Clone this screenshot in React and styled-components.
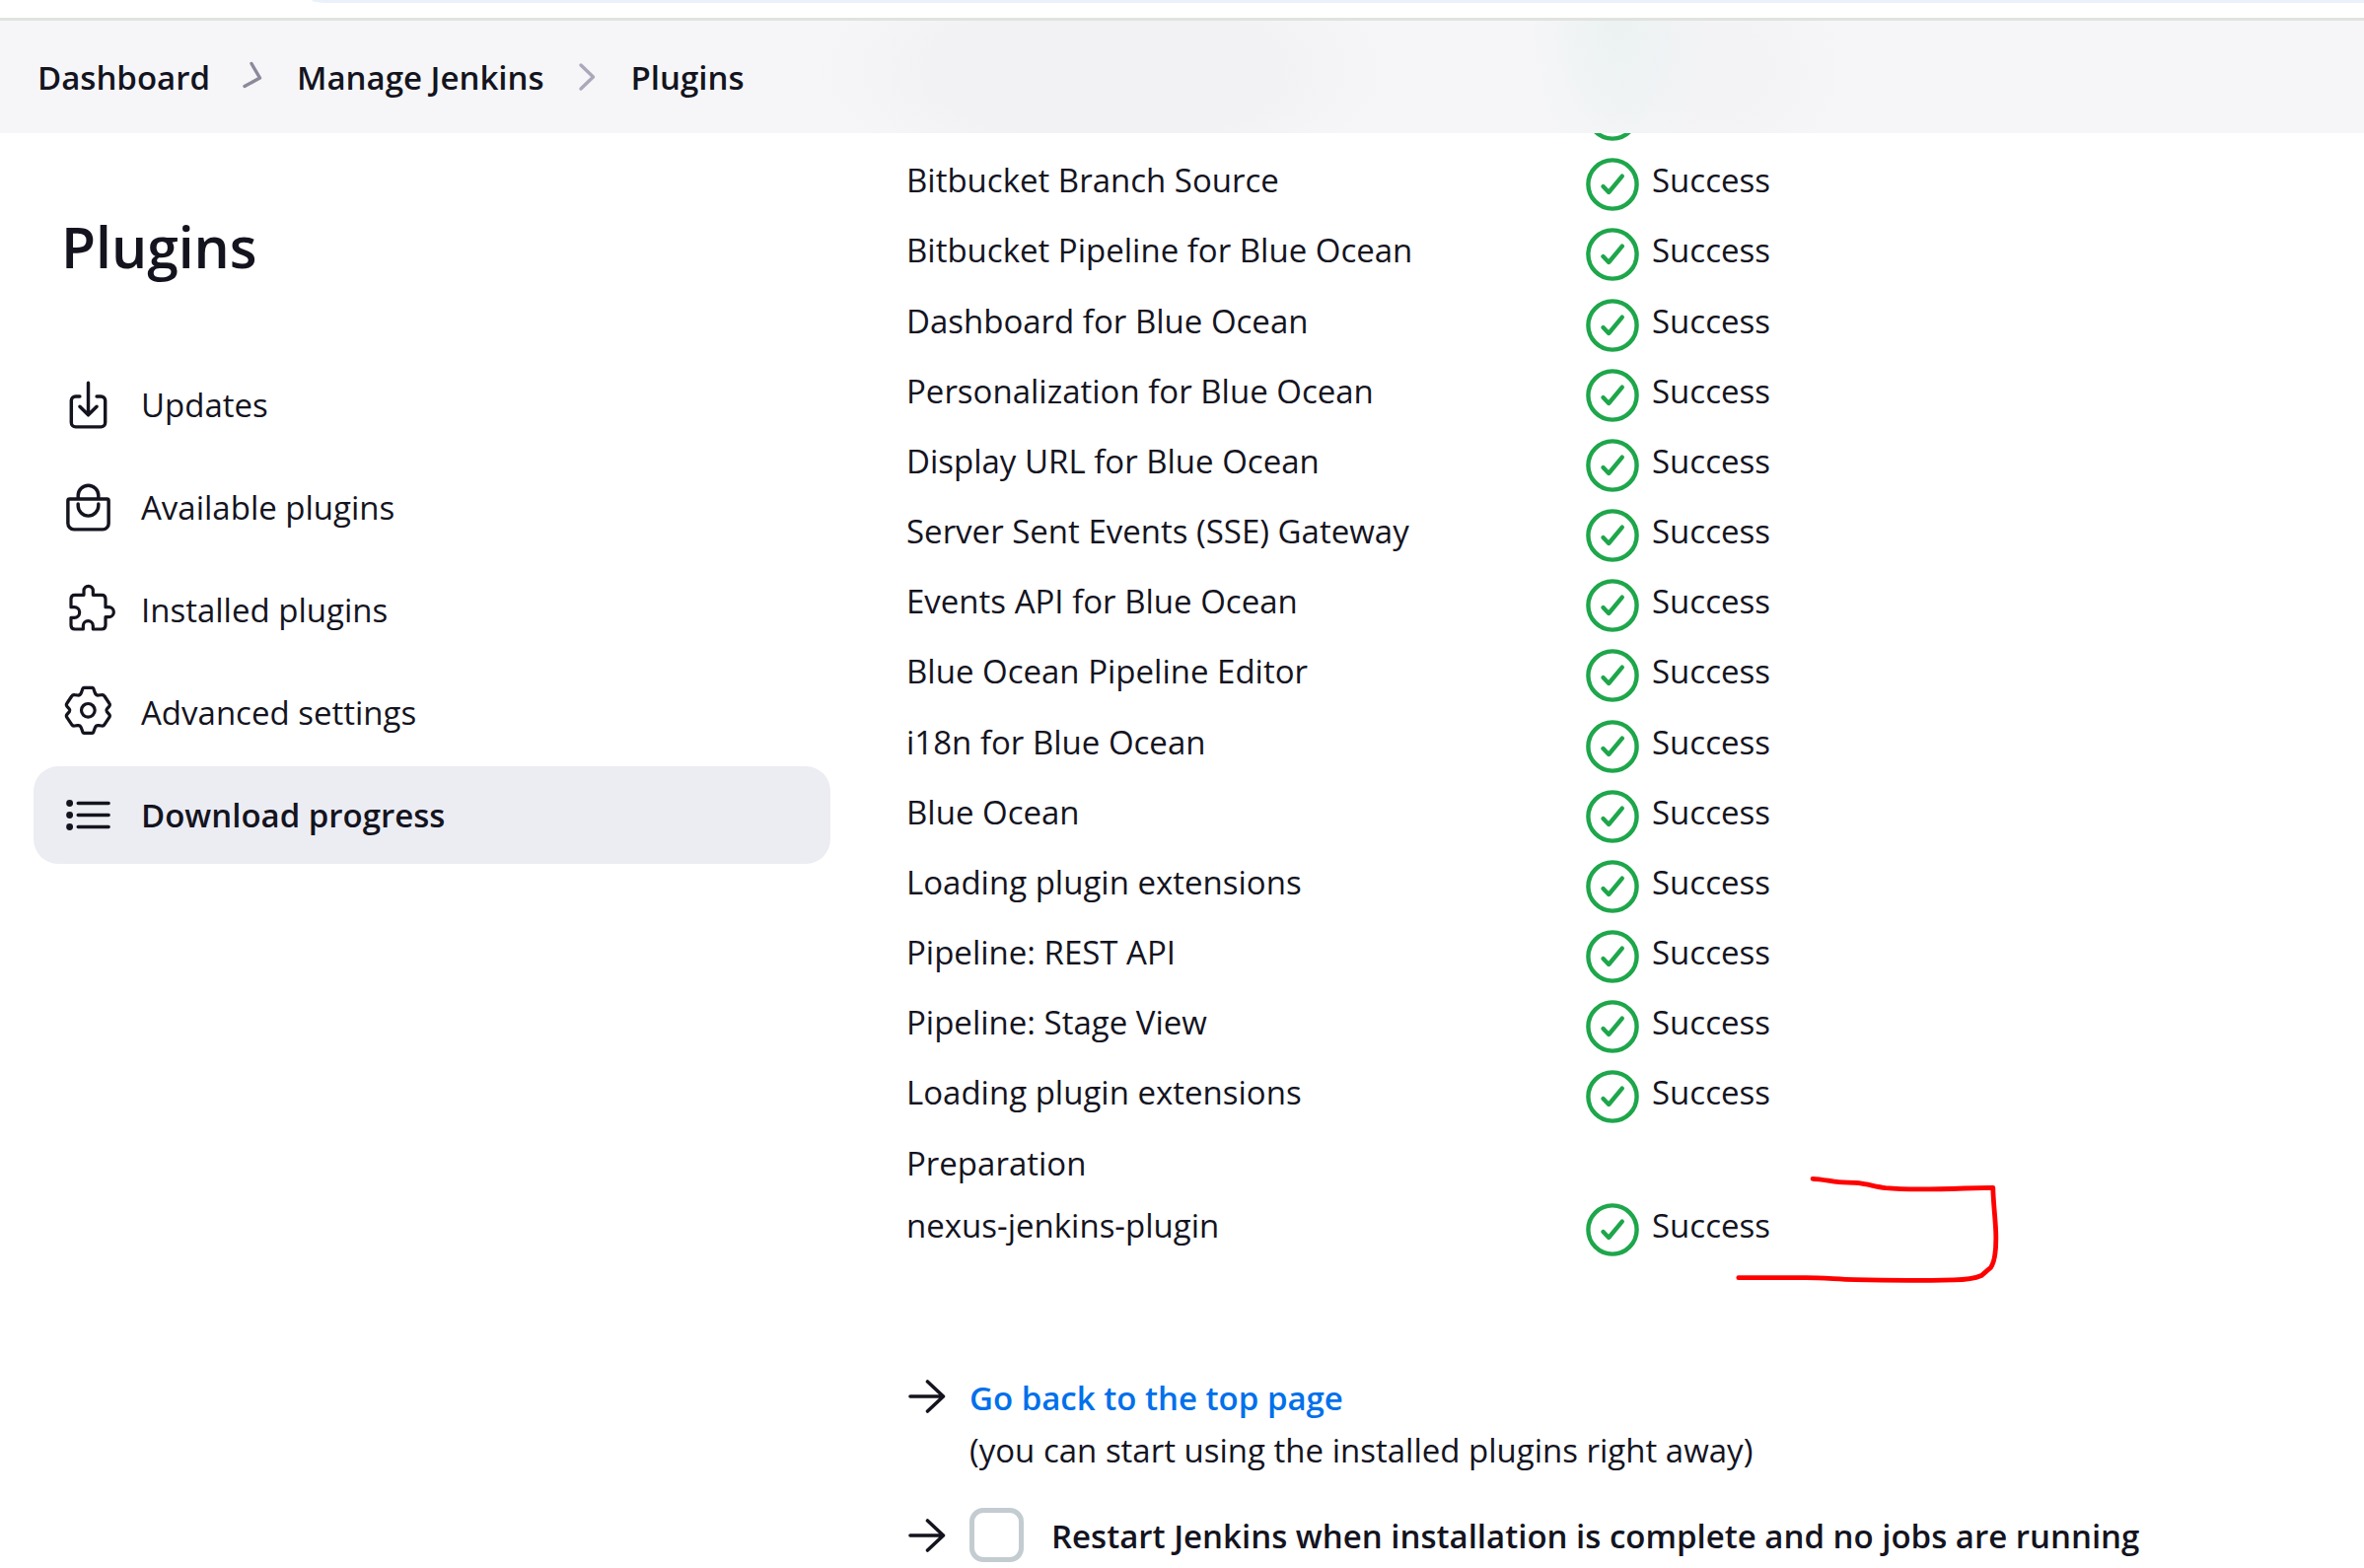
import React from "react";
import styled, { createGlobalStyle, css } from "styled-components";
import { IoBagHandleOutline, IoDownloadOutline, IoListOutline } from "react-icons/io5";

const ink = "#14141f";
const green = "#1ea64b";

const GlobalStyle = createGlobalStyle`
  *, *::before, *::after { box-sizing: border-box; }
  body {
    margin: 0;
    background: #fff;
    color: ${ink};
    font-family: "Open Sans", "Noto Sans", sans-serif;
    font-size: 33px;
    line-height: 50px;
  }
  a { color: inherit; text-decoration: none; }
`;

const Page = styled.div`
  min-height: 100vh;
  overflow: hidden;
`;

const BrowserEdge = styled.div`
  height: 21px;
  padding-left: 316px;
  border-bottom: 3px solid #e0e3de;
`;

const AddressBar = styled.div`
  height: 3px;
  background: #ebf1fb;
  border-bottom-left-radius: 16px 3px;
`;

const Header = styled.header`
  position: relative;
  z-index: 1;
  height: 114px;
  padding: 2px 38px 0;
  display: flex;
  align-items: center;
  background:
    radial-gradient(ellipse 90px 170px at 1640px 0, #ecf2f2 10%, transparent),
    radial-gradient(ellipse 130px 110px at 1740px 50px, #f3f3f6 40%, transparent),
    radial-gradient(ellipse 290px 120px at 1120px 50px, #f2f2f5 60%, transparent),
    #f6f6f8;
`;

const Crumbs = styled.ol`
  margin: 0;
  padding: 0;
  display: flex;
  align-items: center;
  list-style: none;
  font-weight: 600;
`;

const Crumb = styled.li`
  display: flex;
  align-items: center;
`;

const Chevron = styled.svg`
  width: 30px;
  height: 36px;
  padding-bottom: 2px;
  margin: 0 30px 0 28px;
  fill: none;
  stroke: ${(p) => p.$tone};
  stroke-width: 3.4;
  stroke-linecap: round;
  stroke-linejoin: round;
`;

const Layout = styled.div`
  display: grid;
  grid-template-columns: 842px minmax(0, 1fr);
  column-gap: 77px;
`;

const Sidebar = styled.aside`
  padding: 75px 0 0 34px;
`;

const Title = styled.h1`
  margin: 0;
  padding: 0 0 71px 28px;
  font-size: 57px;
  line-height: 80px;
  font-weight: 600;
`;

const Tasks = styled.nav`
  display: flex;
  flex-direction: column;
  gap: 5px;
`;

const Task = styled.a`
  display: flex;
  align-items: center;
  gap: 26px;
  height: 99px;
  padding: 0 28px;
  border-radius: 25px;
  svg { width: 55px; height: 55px; flex: none; }
  ${(p) => p.$active && css`
    background: #ecedf3;
    font-weight: 600;
  `}
`;

const LineIcon = styled.svg`
  fill: none;
  stroke: currentColor;
  stroke-width: 9.6;
  stroke-linecap: round;
  stroke-linejoin: round;
`;

const Main = styled.main`
  margin-top: -55px;
`;

const Progress = styled.table`
  height: 1202px;
  border-collapse: collapse;
`;

const NameCell = styled.th`
  width: 689px;
  padding: 7px 0 6px;
  vertical-align: top;
  text-align: left;
  font-weight: 400;
`;

const StatusCell = styled.td`
  position: relative;
  padding: 7px 0 6px;
  vertical-align: top;
`;

const Status = styled.div`
  display: flex;
  align-items: flex-start;
  gap: 13px;
`;

const StatusIcon = styled.svg`
  width: 54px;
  height: 58px;
  padding: 2px 0;
  fill: none;
  stroke: ${green};
  stroke-width: 4.4;
  stroke-linecap: round;
  stroke-linejoin: round;
`;

const PenMark = styled.svg`
  position: absolute;
  left: 142px;
  top: -26px;
  width: 300px;
  height: 130px;
  fill: none;
  stroke: #ff0000;
  stroke-width: 4.8;
  stroke-linecap: round;
  stroke-linejoin: round;
`;

const NextSteps = styled.div`
  display: grid;
  gap: 32px;
  padding: 107px 0 0 2px;
`;

const Step = styled.div`
  display: flex;
  align-items: ${(p) => (p.$centered ? "center" : "flex-start")};
  gap: 24px;
`;

const Arrow = styled.svg`
  width: 38px;
  height: 54px;
  flex: none;
  fill: none;
  stroke: ${ink};
  stroke-width: 3.6;
  stroke-linecap: round;
  stroke-linejoin: round;
`;

const StepText = styled.div`
  padding-top: 2px;
  line-height: 53px;
`;

const TopLink = styled.a`
  display: block;
  color: #0070eb;
  font-weight: 600;
`;

const RestartLabel = styled.label`
  display: flex;
  align-items: center;
  gap: 28px;
  font-weight: 600;
`;

const RestartText = styled.span`
  padding-top: 3px;
`;

const CheckBox = styled.input`
  appearance: none;
  width: 55px;
  height: 55px;
  margin: 0;
  border: 5px solid #c3ccd1;
  border-radius: 14px;
  background: #fff;
`;

function PuzzleIcon(props) {
  return (
    <LineIcon viewBox="6 15 165 165" {...props}>
      <path d="M36 89V64Q36 52 48 52H75V39A14 14 0 0 1 103 39V52H129Q141 52 141 64V89H151A15 15 0 0 1 151 119H141V144Q141 156 129 156H103V146A15 15 0 0 0 73 146V156H48Q36 156 36 144V121H46A16 16 0 0 0 46 89Z" />
    </LineIcon>
  );
}

function GearIcon(props) {
  return (
    <LineIcon viewBox="6 15 165 165" {...props}>
      <path d="M76 22H100Q104 22 105 27L109 38Q112 46 120 45L129 44Q135 43 138 48L152 69Q156 74 152 79L145 87Q142 91 145 95L152 103Q156 108 152 113L138 134Q135 139 129 138L120 137Q112 136 109 144L105 155Q104 160 100 160H76Q72 160 71 155L67 144Q64 136 56 137L47 138Q41 139 38 134L24 113Q20 108 24 103L31 95Q34 91 31 87L24 79Q20 74 24 69L38 48Q41 43 47 44L56 45Q64 46 67 38L71 27Q72 22 76 22Z" />
      <circle cx="88" cy="91" r="20.5" />
    </LineIcon>
  );
}

const tasks = [
  { label: "Updates", Icon: IoDownloadOutline },
  { label: "Available plugins", Icon: IoBagHandleOutline },
  { label: "Installed plugins", Icon: PuzzleIcon },
  { label: "Advanced settings", Icon: GearIcon },
  { label: "Download progress", Icon: IoListOutline, active: true },
];

const finished = [
  "Bitbucket Branch Source",
  "Bitbucket Pipeline for Blue Ocean",
  "Dashboard for Blue Ocean",
  "Personalization for Blue Ocean",
  "Display URL for Blue Ocean",
  "Server Sent Events (SSE) Gateway",
  "Events API for Blue Ocean",
  "Blue Ocean Pipeline Editor",
  "i18n for Blue Ocean",
  "Blue Ocean",
  "Loading plugin extensions",
  "Pipeline: REST API",
  "Pipeline: Stage View",
  "Loading plugin extensions",
];

function SuccessIcon() {
  return (
    <StatusIcon viewBox="-27 -27 54 54" aria-hidden="true">
      <circle r="24.6" />
      <path d="M-9.5 2-3.8 8 9.8-8.3" />
    </StatusIcon>
  );
}

function Success() {
  return (
    <Status>
      <SuccessIcon />
      <span>Success</span>
    </Status>
  );
}

function ArrowIcon() {
  return (
    <Arrow viewBox="0 0 38 54" aria-hidden="true">
      <path d="M2 27H35M19.5 12 35.5 27 19.5 42" />
    </Arrow>
  );
}

export default function App() {
  return (
    <Page>
      <GlobalStyle />
      <BrowserEdge>
        <AddressBar />
      </BrowserEdge>
      <Header>
        <nav aria-label="Breadcrumb">
          <Crumbs>
            <Crumb>
              <a href="#dashboard">Dashboard</a>
              <Chevron viewBox="0 0 30 34" $tone="#8b899b" aria-hidden="true">
                <path d="M14 3.5 22.5 18 7 26.5" />
              </Chevron>
            </Crumb>
            <Crumb>
              <a href="#manage">Manage Jenkins</a>
              <Chevron viewBox="0 0 30 34" $tone="#a9a9bb" aria-hidden="true">
                <path d="M9 5 21.5 17 9 29" />
              </Chevron>
            </Crumb>
            <Crumb>
              <a href="#plugins">Plugins</a>
            </Crumb>
          </Crumbs>
        </nav>
      </Header>
      <Layout>
        <Sidebar>
          <Title>Plugins</Title>
          <Tasks aria-label="Plugin pages">
            {tasks.map(({ label, Icon, active }) => (
              <Task key={label} href="#" $active={active} aria-current={active ? "page" : undefined}>
                <Icon aria-hidden="true" />
                {label}
              </Task>
            ))}
          </Tasks>
        </Sidebar>
        <Main>
          <Progress>
            <tbody>
              <tr>
                <td />
                <StatusCell>
                  <Status>
                    <SuccessIcon />
                  </Status>
                </StatusCell>
              </tr>
              {finished.map((name, index) => (
                <tr key={index}>
                  <NameCell scope="row">{name}</NameCell>
                  <StatusCell>
                    <Success />
                  </StatusCell>
                </tr>
              ))}
              <tr>
                <NameCell scope="row">Preparation</NameCell>
                <StatusCell />
              </tr>
              <tr>
                <NameCell scope="row">nexus-jenkins-plugin</NameCell>
                <StatusCell>
                  <Success />
                  <PenMark viewBox="1750 1185 300 130" aria-hidden="true">
                    <path d="M1838 1195.3C1847 1195.5 1856 1198 1864 1198.7S1878 1198.7 1885 1199.7C1894 1201 1903 1203.5 1912 1204.7C1935 1207 1965 1206 1992 1205L2020.8 1204.3C2021 1220 2023.8 1240 2023.8 1253.3C2024 1268 2023 1279 2018.5 1285.3C2014 1289 2011 1292 2009 1293.5C2002 1296.5 1992 1297.7 1981 1297.9C1945 1298.8 1910 1298.5 1881 1297.7C1860 1297 1848 1295.7 1831 1295.7H1762.8" />
                  </PenMark>
                </StatusCell>
              </tr>
            </tbody>
          </Progress>
          <NextSteps>
            <Step>
              <ArrowIcon />
              <StepText>
                <TopLink href="#top">Go back to the top page</TopLink>
                (you can start using the installed plugins right away)
              </StepText>
            </Step>
            <Step $centered>
              <ArrowIcon />
              <RestartLabel>
                <CheckBox type="checkbox" />
                <RestartText>
                  Restart Jenkins when installation is complete and no jobs are running
                </RestartText>
              </RestartLabel>
            </Step>
          </NextSteps>
        </Main>
      </Layout>
    </Page>
  );
}
